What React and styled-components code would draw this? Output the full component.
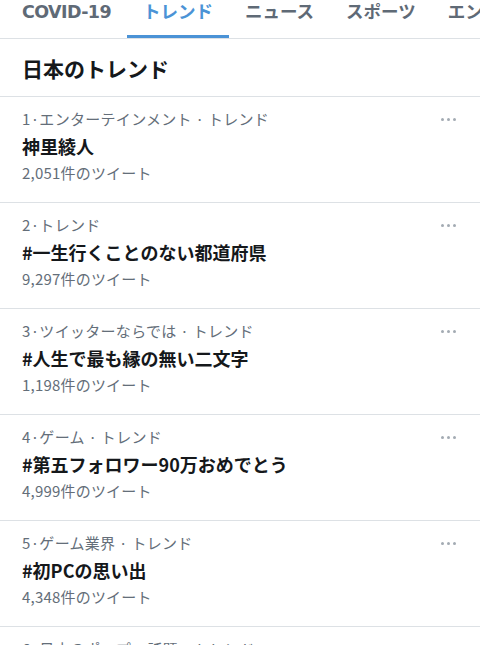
import React from "react";
import styled, { createGlobalStyle } from "styled-components";

const tabs = ["COVID-19", "トレンド", "ニュース", "スポーツ", "エンタメ"];

const trends = [
  { rank: 1, category: "エンターテインメント · トレンド", name: "神里綾人", count: "2,051" },
  { rank: 2, category: "トレンド", name: "#一生行くことのない都道府県", count: "9,297" },
  { rank: 3, category: "ツイッターならでは · トレンド", name: "#人生で最も縁の無い二文字", count: "1,198" },
  { rank: 4, category: "ゲーム · トレンド", name: "#第五フォロワー90万おめでとう", count: "4,999" },
  { rank: 5, category: "ゲーム業界 · トレンド", name: "#初PCの思い出", count: "4,348" },
  { rank: 6, category: "日本のポップ · 話題 · トレンド", name: "#音楽", count: "3,120" },
];

export default function App() {
  return (
    <>
      <GlobalStyle />
      <Page>
        <TabBar>
          {tabs.map((t) => (
            <Tab key={t} active={t === "トレンド"}>
              {t}
            </Tab>
          ))}
        </TabBar>
        <Header>日本のトレンド</Header>
        {trends.map((item) => (
          <Row key={item.rank}>
            <Meta>
              <span>
                {item.rank}·{item.category}
              </span>
              <More>
                <Dot />
                <Dot />
                <Dot />
              </More>
            </Meta>
            <Title>{item.name}</Title>
            <Count>{item.count}件のツイート</Count>
          </Row>
        ))}
      </Page>
    </>
  );
}

const GlobalStyle = createGlobalStyle`
  body {
    margin: 0;
    background: #fff;
    font-family: "Noto Sans CJK JP", "Noto Sans", sans-serif;
  }
`;

const Page = styled.div`
  width: 480px;
  height: 645px;
  overflow: hidden;
  background: #fff;
`;

const TabBar = styled.div`
  display: flex;
  height: 39px;
  box-sizing: border-box;
  padding-left: 6px;
  border-bottom: 1px solid #dde1e5;
  white-space: nowrap;
  overflow: hidden;
`;

const Tab = styled.div`
  flex-shrink: 0;
  height: 38px;
  box-sizing: border-box;
  padding: 0 16px;
  line-height: 24px;
  font-family: "DejaVu Sans", "Noto Sans CJK JP", sans-serif;
  font-size: 17.5px;
  font-weight: 700;
  color: ${(p) => (p.active ? "#4b93d6" : "#5f6a76")};
  border-bottom: 3px solid ${(p) => (p.active ? "#4b93d6" : "transparent")};

  &:first-child {
    letter-spacing: -0.6px;
  }
`;

const Header = styled.div`
  height: 58px;
  box-sizing: border-box;
  padding-left: 22px;
  display: flex;
  align-items: center;
  font-size: 21px;
  font-weight: 700;
  color: #15181b;
  border-bottom: 1px solid #dde1e5;
`;

const Row = styled.div`
  padding: 9px 24px 16px 22px;
  border-bottom: 1px solid #dde1e5;

  &:first-of-type {
    padding-top: 5px;
  }
`;

const Meta = styled.div`
  display: flex;
  justify-content: space-between;
  align-items: center;
  line-height: 26px;
  font-size: 15px;
  letter-spacing: 0.3px;
  color: #646e79;
`;

const More = styled.div`
  display: flex;
  gap: 3px;
`;

const Dot = styled.span`
  width: 3px;
  height: 3px;
  border-radius: 50%;
  background: #a3abb3;
`;

const Title = styled.div`
  line-height: 28px;
  font-size: 18px;
  font-weight: 700;
  color: #15181b;
`;

const Count = styled.div`
  line-height: 26px;
  font-size: 15px;
  letter-spacing: 0.2px;
  color: #646e79;
`;
